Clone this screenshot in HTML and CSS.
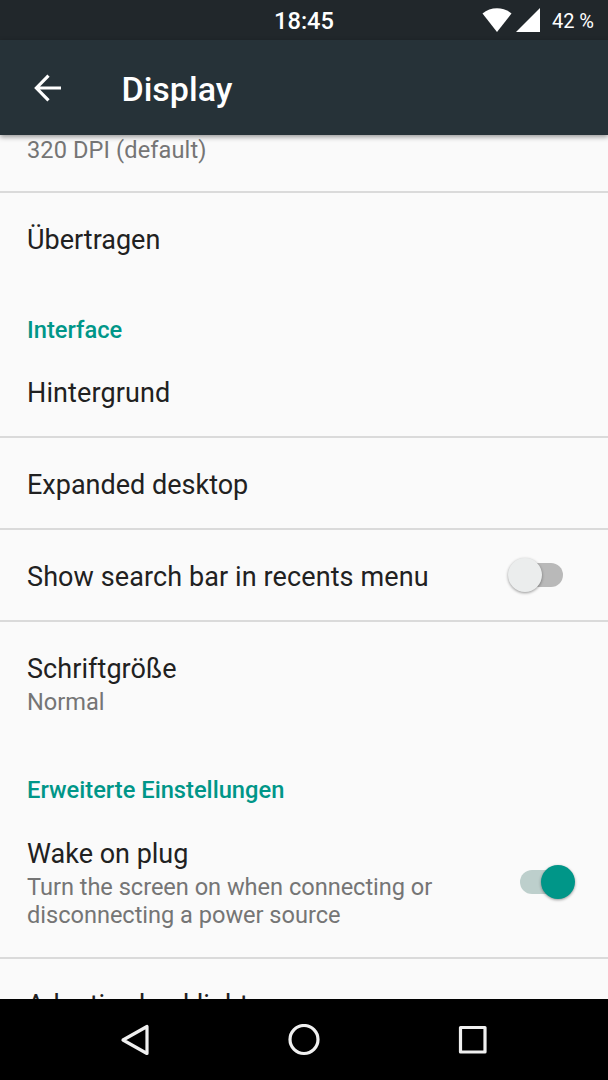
FILE: index.html
```html
<!DOCTYPE html>
<html lang="de">
<head>
<meta charset="utf-8">
<title>Display</title>
<link rel="stylesheet" href="styles.css">
</head>
<body>
<div class="screen">
  <header class="status">
    <span class="clock">18:45</span>
    <div class="indicators">
      <svg class="wifi" width="30" height="24" viewBox="0 0 30 24"><path d="M.500 5.500C8.500-1.500 21.500-1.500 29.500 5.500L15 24Z"/></svg>
      <svg class="cell" width="24" height="24" viewBox="0 0 24 24"><path d="M0 24L24 0V24Z"/></svg>
      <span class="battery">42 %</span>
    </div>
  </header>
  <div class="appbar">
    <svg class="back" width="28" height="28" viewBox="0 0 28 28"><path d="M27 14H3M14.500 1.700L2.400 14L14.500 26.300"/></svg>
    <h1 class="heading">Display</h1>
  </div>
  <main class="list">
    <div class="row row-dpi"><p class="summary">320 DPI (default)</p></div>
    <div class="row row-cast"><p class="title">Übertragen</p></div>
    <h2 class="section section-interface">Interface</h2>
    <div class="row row-wallpaper"><p class="title">Hintergrund</p></div>
    <div class="row"><p class="title">Expanded desktop</p></div>
    <div class="row"><p class="title title-search">Show search bar in recents menu</p><span class="switch off"><span class="thumb"></span></span></div>
    <div class="row row-font"><div><p class="title">Schriftgröße</p><p class="summary">Normal</p></div></div>
    <h2 class="section section-advanced">Erweiterte Einstellungen</h2>
    <div class="row row-wake"><div><p class="title">Wake on plug</p><p class="summary">Turn the screen on when connecting or<br>disconnecting a power source</p></div><span class="switch on"><span class="thumb"></span></span></div>
    <div class="row row-adaptive"><p class="title">Adaptive backlight</p></div>
  </main>
  <nav class="navbar">
    <svg width="30" height="32" viewBox="0 0 30 32"><path d="M27 2.500V29.500L3 16Z"/></svg>
    <svg width="32" height="32" viewBox="0 0 32 32"><circle cx="16" cy="15.500" r="14"/></svg>
    <svg width="30" height="30" viewBox="0 0 30 30"><path d="M2.500 2.500H27V27H2.500Z"/></svg>
  </nav>
</div>
</body>
</html>
```
FILE: styles.css
```css
* { box-sizing: border-box; }
body { margin: 0; font-family: Roboto, "Liberation Sans", sans-serif; }
p, h1, h2 { margin: 0; white-space: nowrap; }
.screen { width: 608px; height: 1080px; display: flex; flex-direction: column; overflow: hidden; background: #fafafa; }
.status { height: 40px; flex: none; background: #21272b; color: #fff; display: grid; grid-template-columns: 1fr auto 1fr; align-items: center; }
.clock { grid-column: 2; font-size: 23.600px; font-weight: 500; line-height: 38px; padding-top: 2px; }
.indicators { display: flex; align-items: center; justify-content: flex-end; padding-right: 14px; }
.indicators svg { fill: #fff; }
.cell { margin-left: 4px; }
.battery { margin-left: 12px; font-size: 20px; line-height: 38px; padding-top: 2px; }
.appbar { height: 95px; flex: none; background: #263238; color: #fff; display: flex; align-items: center; padding: 0 34px; z-index: 1; box-shadow: 0 2px 5px rgba(0,0,0,.4); }
.back { fill: none; stroke: #fff; stroke-width: 3.2; }
.heading { margin: 3px 0 0 59.500px; font-size: 34px; font-weight: 500; line-height: 40px; }
.list { flex: 1; min-height: 0; overflow: hidden; }
.row { height: 92px; border-bottom: 2px solid #dadada; padding: 4px 33px 0 27px; display: flex; align-items: center; justify-content: space-between; }
.title { font-size: 27px; line-height: 36px; color: #212121; }
.summary { font-size: 23.600px; line-height: 28px; color: #757575; }
.section { padding-left: 27px; font-size: 23.700px; font-weight: 500; line-height: 28px; color: #009688; }
.row-dpi { height: 58px; align-items: flex-start; padding-top: 1px; }
.row-dpi .summary { letter-spacing: .1px; }
.row-cast { border: 0; padding-top: 2px; }
.section-interface { padding-top: 31px; height: 61px; }
.row-wallpaper .title { letter-spacing: .12px; }
.row-font { height: 136px; align-items: flex-start; padding-top: 29px; border: 0; }
.row-font .title { letter-spacing: .06px; }
.row-font .summary { padding-top: 1px; }
.section-advanced { padding-top: 18px; height: 62px; }
.row-wake { height: 139px; align-items: flex-start; padding-top: 16px; }
.row-wake .title { margin-bottom: 1px; }
.row-wake .summary { letter-spacing: -.03px; }
.row-adaptive { align-items: flex-start; padding-top: 28px; border: 0; }
.title-search { letter-spacing: .1px; }
.switch { position: relative; width: 55px; height: 24px; flex: none; }
.switch::before { content: ""; position: absolute; left: 3px; top: 0; width: 39.500px; height: 24px; border-radius: 12px; background: #b9b9b9; }
.thumb { position: absolute; left: -12.500px; top: -5px; width: 34px; height: 34px; border-radius: 50%; background: #ebeded; box-shadow: 0 1px 3px rgba(0,0,0,.4); }
.off { margin-bottom: 4px; }
.on { margin-top: 34px; }
.on::before { left: 0; width: 42px; background: #bdcfcc; }
.on .thumb { left: 21px; background: #009688; }
.navbar { height: 81px; flex: none; background: #000; display: flex; align-items: center; justify-content: space-between; padding: 0 120px; }
.navbar svg { fill: none; stroke: #f0f0f0; stroke-width: 3.2; stroke-linejoin: round; }
```
